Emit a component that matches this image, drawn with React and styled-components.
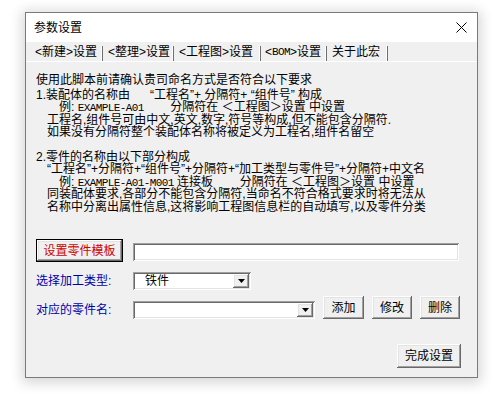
import React from "react";
import styled, { createGlobalStyle } from "styled-components";

const Global = createGlobalStyle`
  html, body { margin: 0; padding: 0; background: #ffffff; }
  body { font-family: "Liberation Sans", "Noto Sans CJK SC", sans-serif; font-size: 12px; color: #000; }
`;

const Page = styled.div`
  width: 497px;
  height: 394px;
  padding: 12px 0 0 25px;
  box-sizing: border-box;
`;

const Window = styled.div`
  width: 453px;
  height: 366px;
  box-sizing: border-box;
  border: 1px solid #7a7a7a;
  background: #f0f0f0;
  box-shadow: 0 2px 12px 3px rgba(0, 0, 0, 0.16);
  display: flex;
  flex-direction: column;
`;

const TitleBar = styled.div`
  height: 29px;
  background: #ffffff;
  display: flex;
  align-items: center;
  justify-content: space-between;
  padding: 0 10px 0 8px;
  font-size: 12px;
  line-height: 12px;
`;

const CloseIcon = () => (
  <svg width="11" height="11" viewBox="0 0 11 11">
    <path d="M0.5 0.5 L10.5 10.5 M10.5 0.5 L0.5 10.5" stroke="#000" strokeWidth="1" fill="none" />
  </svg>
);

const TabStrip = styled.div`
  height: 19px;
  display: flex;
  align-items: flex-end;
  padding-left: 3px;
  border-bottom: 1px solid #ffffff;
`;

const Tab = styled.div`
  width: ${(p) => p.$w}px;
  height: 15px;
  box-sizing: border-box;
  padding-left: ${(p) => p.$pl || 6}px;
  border-right: 1px solid #6e6e6e;
  box-shadow: inset -1px 0 0 #ffffff;
  font-size: 12px;
  line-height: 12px;
  white-space: nowrap;
  display: flex;
  align-items: flex-start;
  margin-top: -2px;
`;

const Content = styled.div`
  flex: 1;
  display: flex;
  flex-direction: column;
  padding: 12px 16px 9px 10px;
`;

const Paragraph = styled.div`
  display: flex;
  flex-direction: column;
  margin-top: ${(p) => p.$mt || 0}px;
`;

const Line = styled.div`
  height: 12.5px;
  line-height: 12.5px;
  font-size: 12px;
  white-space: pre;
  padding-left: ${(p) => p.$indent || 0}px;
  margin-bottom: ${(p) => p.$mb || 0}px;
`;

const Mono = styled.span`
  font-family: "Liberation Mono", monospace;
  font-size: 11px;
  letter-spacing: -0.6px;
`;

const Row = styled.div`
  display: flex;
  align-items: ${(p) => p.$align || "center"};
  margin-top: ${(p) => p.$mt || 0}px;
`;

const Label = styled.div`
  width: 97px;
  color: #0000a8;
  font-size: 12px;
  line-height: 12px;
  align-self: center;
  margin-top: ${(p) => p.$mt || 0}px;
`;

const Button = styled.div`
  width: ${(p) => p.$w}px;
  height: ${(p) => p.$h || 23}px;
  box-sizing: border-box;
  background: #f0f0f0;
  display: flex;
  align-items: center;
  justify-content: center;
  font-size: 12px;
  line-height: 12px;
  color: ${(p) => p.$color || "#000"};
  border: ${(p) => (p.$default ? "1px solid #000" : "none")};
  box-shadow: inset -1px -1px 0 #696969, inset 1px 1px 0 #ffffff,
    inset -2px -2px 0 #a0a0a0, inset 2px 2px 0 #e3e3e3;
  margin-left: ${(p) => p.$ml || 0}px;
  white-space: nowrap;
`;

const Field = styled.div`
  width: ${(p) => p.$w}px;
  height: 18px;
  box-sizing: border-box;
  background: #ffffff;
  box-shadow: inset 1px 1px 0 #a0a0a0, inset -1px -1px 0 #ffffff,
    inset 2px 2px 0 #696969, inset -2px -2px 0 #e3e3e3;
  display: flex;
  align-items: center;
  padding: 2px 2px 2px 12px;
  font-size: 12px;
  line-height: 12px;
  margin-bottom: ${(p) => p.$mb || 0}px;
  margin-left: ${(p) => p.$ml || 0}px;
`;

const ComboText = styled.div`
  flex: 1;
`;

const ArrowBtn = styled.div`
  width: 16px;
  height: 14px;
  box-sizing: border-box;
  background: #f0f0f0;
  box-shadow: inset -1px -1px 0 #696969, inset 1px 1px 0 #ffffff,
    inset -2px -2px 0 #a0a0a0, inset 2px 2px 0 #e3e3e3;
  display: flex;
  align-items: center;
  justify-content: center;
`;

const Arrow = () => (
  <svg width="7" height="4" viewBox="0 0 7 4">
    <path d="M0 0 H7 L3.5 4 Z" fill="#000" />
  </svg>
);

const Combo = ({ w, value }) => (
  <Field $w={w}>
    <ComboText>{value}</ComboText>
    <ArrowBtn>
      <Arrow />
    </ArrowBtn>
  </Field>
);

const Footer = styled.div`
  display: flex;
  justify-content: flex-end;
  margin-top: auto;
`;

export default function App() {
  return (
    <>
      <Global />
      <Page>
        <Window>
          <TitleBar>
            <span>参数设置</span>
            <CloseIcon />
          </TitleBar>
          <TabStrip>
            <Tab $w={74} $pl={6}>&lt;新建&gt;设置</Tab>
            <Tab $w={71} $pl={5}>&lt;整理&gt;设置</Tab>
            <Tab $w={87} $pl={5}>&lt;工程图&gt;设置</Tab>
            <Tab $w={66} $pl={4}>&lt;<Mono>BOM</Mono>&gt;设置</Tab>
            <Tab $w={61} $pl={5}>关于此宏</Tab>
          </TabStrip>
          <Content>
            <Paragraph>
              <Line $mb={2}>使用此脚本前请确认贵司命名方式是否符合以下要求</Line>
              <Line>1.装配体的名称由{"      "}“工程名”+ 分隔符+ “组件号” 构成</Line>
              <Line $indent={23}>例: <Mono>EXAMPLE-A01</Mono>{"        "}分隔符在 ＜工程图＞设置 中设置</Line>
              <Line $indent={11}>工程名,组件号可由中文,英文,数字,符号等构成,但不能包含分隔符.</Line>
              <Line $indent={11}>如果没有分隔符整个装配体名称将被定义为工程名,组件名留空</Line>
            </Paragraph>
            <Paragraph $mt={12}>
              <Line>2.零件的名称由以下部分构成</Line>
              <Line $indent={11}>“工程名”+分隔符+“组件号”+分隔符+“加工类型与零件号”+分隔符+中文名</Line>
              <Line $indent={23}>例: <Mono>EXAMPLE-A01-M001</Mono> 连接板{"        "}分隔符在 ＜工程图＞设置 中设置</Line>
              <Line $indent={11}>同装配体要求,各部分不能包含分隔符,当命名不符合格式要求时将无法从</Line>
              <Line $indent={11}>名称中分离出属性信息,这将影响工程图信息栏的自动填写,以及零件分类</Line>
            </Paragraph>
            <Row $mt={26} $align="flex-end">
              <Button $w={87} $default $color="#cc0000">设置零件模板</Button>
              <Field $w={326} $mb={1} $ml={10} />
            </Row>
            <Row $mt={10}>
              <Label>选择加工类型:</Label>
              <Combo w={118} value="铁件" />
            </Row>
            <Row $mt={6} $align="flex-end">
              <Label $mt={4}>对应的零件名:</Label>
              <Combo w={182} value="" />
              <Button $w={41} $ml={8}>添加</Button>
              <Button $w={40} $ml={8}>修改</Button>
              <Button $w={40} $ml={8}>删除</Button>
            </Row>
            <Footer>
              <Button $w={64} $h={24}>完成设置</Button>
            </Footer>
          </Content>
        </Window>
      </Page>
    </>
  );
}
